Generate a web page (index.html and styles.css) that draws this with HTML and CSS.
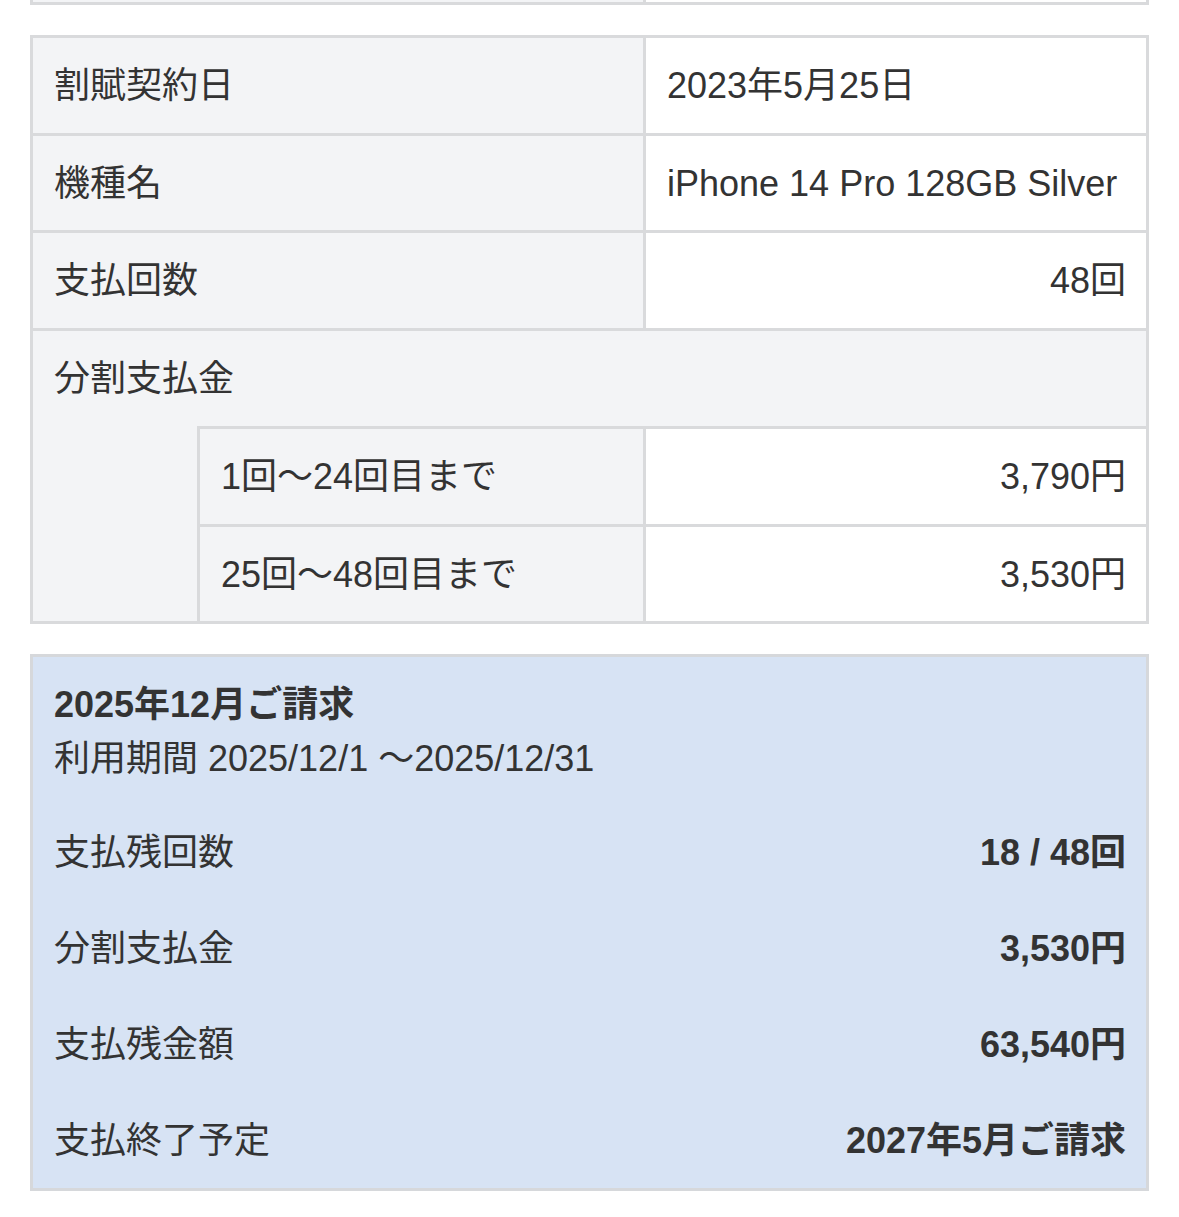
FILE: index.html
```html
<!DOCTYPE html>
<html lang="ja">
<head>
<meta charset="utf-8">
<title>割賦契約</title>
<link rel="stylesheet" href="styles.css">
</head>
<body>
<div class="page">
  <div class="prev-tail">
    <div class="tail-label"></div>
    <div class="tail-value"></div>
  </div>

  <div class="spec">
    <div class="cell label">割賦契約日</div>
    <div class="cell value">2023年5月25日</div>
    <div class="cell label">機種名</div>
    <div class="cell value">iPhone 14 Pro 128GB Silver</div>
    <div class="cell label">支払回数</div>
    <div class="cell value num">48回</div>
    <div class="section">
      <div class="section-title">分割支払金</div>
      <div class="sub">
        <div class="cell label">1回〜24回目まで</div>
        <div class="cell value num">3,790円</div>
        <div class="cell label">25回〜48回目まで</div>
        <div class="cell value num">3,530円</div>
      </div>
    </div>
  </div>

  <div class="billing">
    <div class="billing-title">2025年12月ご請求</div>
    <div class="billing-period">利用期間 2025/12/1 〜2025/12/31</div>
    <div class="billing-rows">
      <div class="billing-row"><span>支払残回数</span><span class="strong">18 / 48回</span></div>
      <div class="billing-row"><span>分割支払金</span><span class="strong">3,530円</span></div>
      <div class="billing-row"><span>支払残金額</span><span class="strong">63,540円</span></div>
      <div class="billing-row"><span>支払終了予定</span><span class="strong">2027年5月ご請求</span></div>
    </div>
  </div>
</div>
</body>
</html>
```

FILE: styles.css
```css
html, body {
  margin: 0;
  padding: 0;
  background: #ffffff;
}

body {
  font-family: "Liberation Sans", "Noto Sans CJK JP", sans-serif;
  font-size: 36px;
  color: #333333;
}

.page {
  padding: 0 30px;
}

.prev-tail {
  display: grid;
  grid-template-columns: 610px 500px;
  gap: 3px;
  height: 2px;
  background: #d9dadc;
  border: 3px solid #d9dadc;
  border-top: none;
  margin-bottom: 30px;
}

.tail-label {
  background: #f3f4f6;
}

.tail-value {
  background: #ffffff;
}

.spec {
  display: grid;
  grid-template-columns: 610px 500px;
  gap: 3px;
  background: #d9dadc;
  border: 3px solid #d9dadc;
}

.cell {
  padding: 21px 20px 19px 21px;
  line-height: 54.5px;
  white-space: nowrap;
}

.label {
  background: #f3f4f6;
}

.value {
  background: #ffffff;
}

.num {
  text-align: right;
}

.section {
  grid-column: 1 / -1;
  background: #f3f4f6;
}

.section-title {
  padding: 21px 21px 20px;
  line-height: 54.5px;
}

.sub {
  margin-left: 164px;
  display: grid;
  grid-template-columns: 443px 500px;
  gap: 3px;
  background: #d9dadc;
  border-top: 3px solid #d9dadc;
  border-left: 3px solid #d9dadc;
}

.billing {
  margin-top: 30px;
  background: #d7e3f4;
  border: 3px solid #d6d8db;
  padding: 21px 20px 0 21px;
}

.billing-title {
  font-weight: 700;
  line-height: 54px;
}

.billing-period {
  line-height: 54px;
}

.billing-rows {
  margin-top: 18px;
}

.billing-row {
  display: flex;
  justify-content: space-between;
  padding: 22px 0 20px;
  line-height: 54px;
}

.strong {
  font-weight: 700;
}
```
